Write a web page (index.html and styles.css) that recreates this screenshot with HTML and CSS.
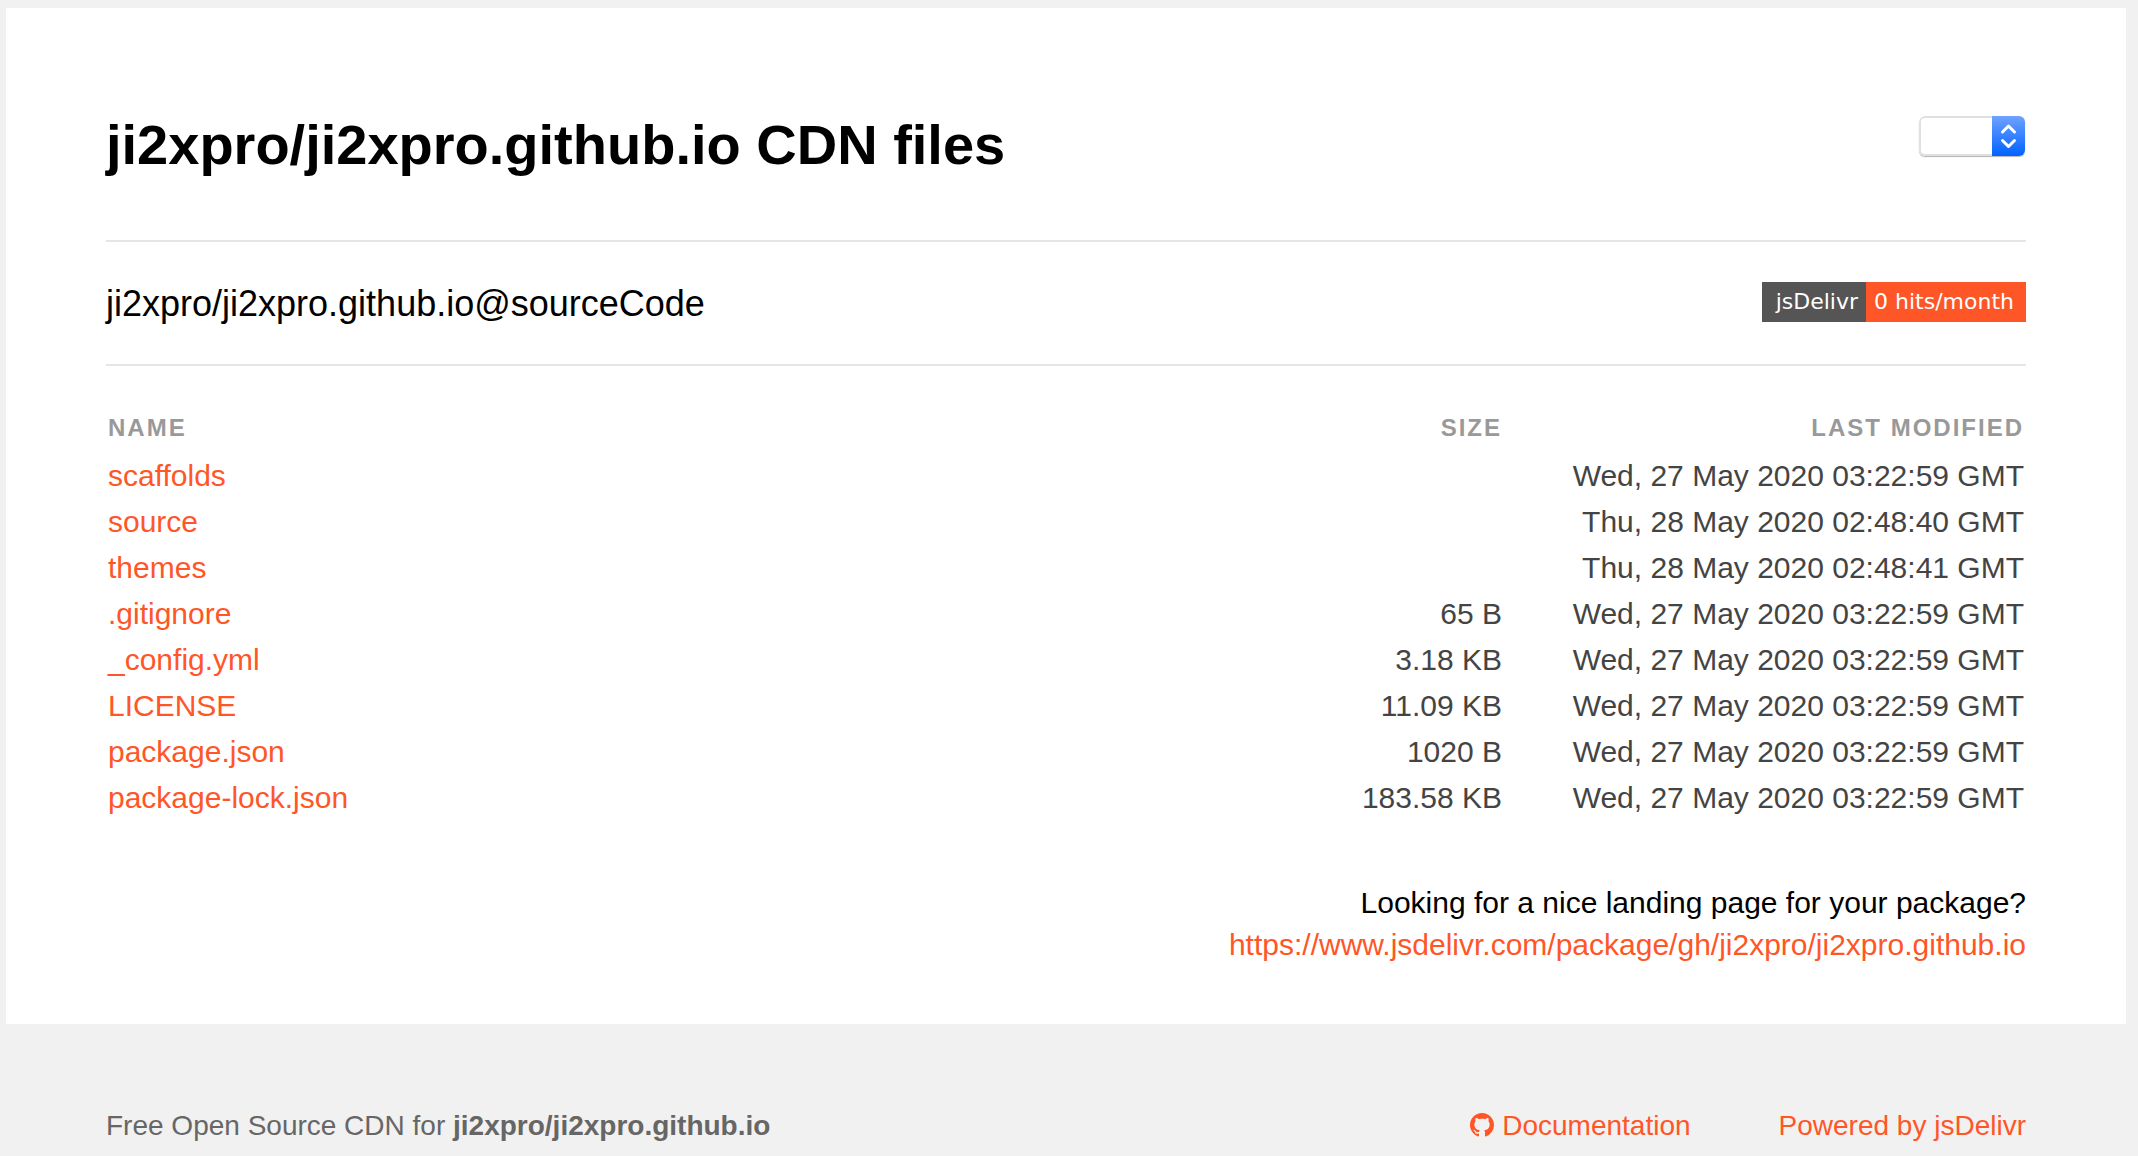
FILE: index.html
```html
<!DOCTYPE html>
<html lang="en">

<head>
  <meta charset="UTF-8" />
  <title>ji2xpro/ji2xpro.github.io CDN files</title>
  <link rel="stylesheet" href="styles.css">
</head>

<body>
  <main class="box">
    <header class="top">
      <h1>ji2xpro/ji2xpro.github.io CDN files</h1>
      <div class="version-select">
        <span class="select-value"></span>
        <span class="select-arrows">
          <svg width="33" height="40" viewBox="0 0 33 40" fill="none" stroke="#fff" stroke-width="3" stroke-linecap="round" stroke-linejoin="round">
            <path d="M10.5 16l6-6 6 6" />
            <path d="M10.5 24.5l6 6 6-6" />
          </svg>
        </span>
      </div>
    </header>

    <div class="version-row">
      <h2>ji2xpro/ji2xpro.github.io@sourceCode</h2>
      <div class="badge"><span class="badge-label">jsDelivr</span><span class="badge-value">0 hits/month</span></div>
    </div>

    <table class="files">
      <thead>
        <tr>
          <th class="name">Name</th>
          <th class="size">Size</th>
          <th class="time">Last modified</th>
        </tr>
      </thead>
      <tbody>
        <tr>
          <td class="name"><a href="#">scaffolds</a></td>
          <td class="size"></td>
          <td class="time">Wed, 27 May 2020 03:22:59 GMT</td>
        </tr>
        <tr>
          <td class="name"><a href="#">source</a></td>
          <td class="size"></td>
          <td class="time">Thu, 28 May 2020 02:48:40 GMT</td>
        </tr>
        <tr>
          <td class="name"><a href="#">themes</a></td>
          <td class="size"></td>
          <td class="time">Thu, 28 May 2020 02:48:41 GMT</td>
        </tr>
        <tr>
          <td class="name"><a href="#">.gitignore</a></td>
          <td class="size">65 B</td>
          <td class="time">Wed, 27 May 2020 03:22:59 GMT</td>
        </tr>
        <tr>
          <td class="name"><a href="#">_config.yml</a></td>
          <td class="size">3.18 KB</td>
          <td class="time">Wed, 27 May 2020 03:22:59 GMT</td>
        </tr>
        <tr>
          <td class="name"><a href="#">LICENSE</a></td>
          <td class="size">11.09 KB</td>
          <td class="time">Wed, 27 May 2020 03:22:59 GMT</td>
        </tr>
        <tr>
          <td class="name"><a href="#">package.json</a></td>
          <td class="size">1020 B</td>
          <td class="time">Wed, 27 May 2020 03:22:59 GMT</td>
        </tr>
        <tr>
          <td class="name"><a href="#">package-lock.json</a></td>
          <td class="size">183.58 KB</td>
          <td class="time">Wed, 27 May 2020 03:22:59 GMT</td>
        </tr>
      </tbody>
    </table>

    <p class="landing">
      Looking for a nice landing page for your package?<br>
      <a href="#">https://www.jsdelivr.com/package/gh/ji2xpro/ji2xpro.github.io</a>
    </p>
  </main>

  <footer class="foot">
    <div class="foot-text">Free Open Source CDN for <b>ji2xpro/ji2xpro.github.io</b></div>
    <div class="foot-links">
      <a href="#" class="doc-link">
        <svg width="24" height="24" viewBox="0 0 16 16" fill="currentColor">
          <path d="M8 0C3.58 0 0 3.58 0 8c0 3.54 2.29 6.53 5.47 7.59.4.07.55-.17.55-.38 0-.19-.01-.82-.01-1.49-2.01.37-2.53-.49-2.69-.94-.09-.23-.48-.94-.82-1.13-.28-.15-.68-.52-.01-.53.63-.01 1.08.58 1.23.82.72 1.21 1.87.87 2.33.66.07-.52.28-.87.51-1.07-1.78-.2-3.64-.89-3.64-3.95 0-.87.31-1.59.82-2.15-.08-.2-.36-1.02.08-2.12 0 0 .67-.21 2.2.82.64-.18 1.32-.27 2-.27s1.36.09 2 .27c1.53-1.04 2.2-.82 2.2-.82.44 1.1.16 1.92.08 2.12.51.56.82 1.27.82 2.15 0 3.07-1.87 3.75-3.65 3.95.29.25.54.73.54 1.48 0 1.07-.01 1.93-.01 2.2 0 .21.15.46.55.38A8.01 8.01 0 0 0 16 8c0-4.42-3.58-8-8-8z" />
        </svg>
        Documentation
      </a>
      <a href="#">Powered by jsDelivr</a>
    </div>
  </footer>
</body>

</html>
```

FILE: styles.css
```css
html,
body {
  margin: 0;
  padding: 0;
}

body {
  font-family: "Liberation Sans", Arial, sans-serif;
  background: #f1f1f1;
  color: #000;
  padding: 8px 12px 0 6px;
}

a {
  color: #ff5627;
  text-decoration: none;
}

.box {
  background: #fff;
  height: 1016px;
  box-sizing: border-box;
  padding: 0 100px;
}

.top {
  display: flex;
  justify-content: space-between;
  align-items: flex-start;
  height: 232px;
  border-bottom: 2px solid #e6e6e6;
}

h1 {
  margin: 105px 0 0;
  font-size: 56px;
  line-height: 64px;
  font-weight: bold;
}

.version-select {
  display: flex;
  width: 106px;
  height: 40px;
  margin: 108px 1px 0 0;
  box-sizing: border-box;
  border-radius: 6px;
  overflow: hidden;
  box-shadow: 0 1px 1px rgba(0, 0, 0, 0.3);
}

.select-value {
  flex: 1;
  background: #fff;
  border: 2px solid #e0e0e0;
  border-right: none;
  border-radius: 6px 0 0 6px;
}

.select-arrows {
  width: 33px;
  height: 40px;
  background: linear-gradient(#6fa2ff, #0062ff);
}

.version-row {
  display: flex;
  justify-content: space-between;
  align-items: center;
  height: 122px;
  border-bottom: 2px solid #e6e6e6;
}

h2 {
  margin: 2px 0 0;
  font-size: 36px;
  line-height: 44px;
  font-weight: normal;
}

.badge {
  display: flex;
  height: 40px;
  line-height: 40px;
  font-family: "DejaVu Sans", Verdana, sans-serif;
  font-size: 22px;
  color: #fff;
  margin-top: -2px;
}

.badge-label {
  background: #555;
  padding: 0 8px 0 14px;
}

.badge-value {
  background: #ff5627;
  padding: 0 12px 0 8px;
}

.files {
  width: 100%;
  margin-top: 43px;
  border-collapse: collapse;
  font-size: 30px;
}

.files th {
  font-size: 24px;
  line-height: 30px;
  padding: 4px 2px 10px;
  color: #999;
  text-transform: uppercase;
  letter-spacing: 2px;
  font-weight: bold;
}

.files td {
  height: 46px;
  padding: 0 2px;
  color: #444;
}

.name {
  text-align: left;
}

.size {
  text-align: right;
}

.time {
  text-align: right;
  width: 518px;
}

.landing {
  margin: 61px 0 0;
  text-align: right;
  font-size: 30px;
  line-height: 42px;
}

.foot {
  display: flex;
  justify-content: space-between;
  padding: 85px 100px 0;
  font-size: 28px;
  line-height: 34px;
  color: #666;
}

.foot-links {
  display: flex;
  gap: 88px;
}

.doc-link svg {
  vertical-align: -2px;
}
```
